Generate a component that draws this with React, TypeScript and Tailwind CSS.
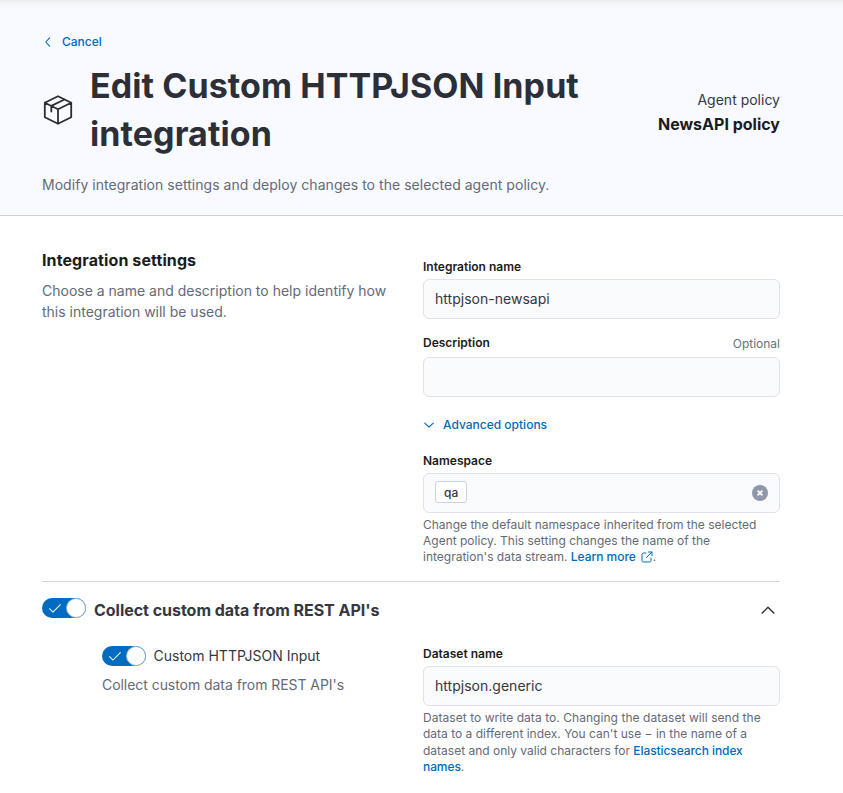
import React from "react";

function Switch() {
  return (
    <span className="flex h-5 w-11 shrink-0 items-center justify-end rounded-full bg-[#006bc0]">
      <svg className="mr-auto ml-[5px]" width="16" height="16" viewBox="0 0 16 16" fill="none" stroke="#fff" strokeWidth="1.05">
        <path d="M2.3 8.3 6 12l7.6-7.6" />
      </svg>
      <span className="size-5 rounded-full border border-[#9bb0c5] bg-white" />
    </span>
  );
}

function Label({ children }: { children: React.ReactNode }) {
  return <div className="text-[12px] leading-4 font-semibold text-[#1a1c21]">{children}</div>;
}

function Field({ children }: { children?: React.ReactNode }) {
  return (
    <div className="flex h-10 items-center rounded-[6px] border border-[#dfe1ef] bg-[#fafbfd] px-[11px] text-[14px] leading-5 tracking-[0.02px] text-[#343741]">
      {children}
    </div>
  );
}

export default function App() {
  return (
    <div className="h-[793px] w-full overflow-hidden bg-white font-[Inter,sans-serif] text-[14px] leading-[21px] text-[#343741]">
      <header className="h-[216px] border-b border-[#cbd1de] bg-[#f9faff] bg-[linear-gradient(#e9eaee,#f3f4f8_3px,#f9faff_9px)] pr-[63px] pl-[42px] pt-[34px]">
        <a className="flex h-4 items-center text-[12px] leading-4 font-medium text-[#006bb8]">
          <svg className="mr-2" width="12" height="12" viewBox="0 0 12 12" fill="none" stroke="currentColor" strokeWidth="1.1" strokeLinecap="round" strokeLinejoin="round">
            <path d="M7.6 1.9 3.8 6l3.8 4.1" />
          </svg>
          Cancel
        </a>
        <div className="mt-3 flex h-24 items-center">
          <svg className="shrink-0" width="32" height="32" viewBox="0 0 32 32" fill="none" stroke="#2b2d36" strokeWidth="1.8" strokeLinejoin="round" strokeLinecap="round">
            <path d="M16 2.2 29.2 8.7v14.6L16 29.8 2.8 23.3V8.7zM2.8 8.7 16 15.2l13.2-6.5M16 15.2v14.6M9.3 17.5v-5.6l13.2-6.4" />
          </svg>
          <h1 className="ml-4 w-[510px] text-[34px] leading-[48px] font-bold tracking-[0.08px] text-[#2d2f38]">Edit Custom HTTPJSON Input integration</h1>
          <div className="ml-auto pt-1 text-right">
            <div className="leading-[21px]">Agent policy</div>
            <div className="mt-0.5 text-[16px] leading-6 font-bold whitespace-nowrap text-[#1a1c21]">NewsAPI policy</div>
          </div>
        </div>
        <p className="mt-4 tracking-[0.04px] text-[#646a77]">Modify integration settings and deploy changes to the selected agent policy.</p>
      </header>

      <main className="mr-[63px] ml-[42px]">
        <section className="flex h-[366px] border-b border-[#cdd4e0]">
          <div className="w-[381px] shrink-0 pt-8">
            <h2 className="text-[16px] leading-6 font-bold tracking-[0.1px] text-[#1a1c21]">Integration settings</h2>
            <p className="mt-2 w-[360px] text-[#646a77]">Choose a name and description to help identify how this integration will be used.</p>
          </div>
          <div className="flex-1 pt-[43px]">
            <Label>Integration name</Label>
            <div className="mt-1"><Field>httpjson-newsapi</Field></div>
            <div className="mt-4 mb-[5px] flex justify-between">
              <Label>Description</Label>
              <span className="pt-px text-[12px] leading-4 text-[#69707d]">Optional</span>
            </div>
            <Field />
            <a className="mt-5 flex h-4 items-center text-[12px] leading-4 font-medium text-[#006bb8]">
              <svg className="mr-2" width="12" height="12" viewBox="0 0 12 12" fill="none" stroke="currentColor" strokeWidth="1.1" strokeLinecap="round" strokeLinejoin="round">
                <path d="M1.7 4.2 6 8l4.3-3.8" />
              </svg>
              Advanced options
            </a>
            <div className="mt-5"><Label>Namespace</Label></div>
            <div className="mt-1">
              <Field>
                <span className="mb-0.5 h-[22px] rounded-[3px] border border-[#cbd2e2] bg-white px-2 text-[12px] leading-[22px] font-medium">qa</span>
                <svg className="ml-auto" width="16" height="16" viewBox="0 0 16 16" fill="none">
                  <circle cx="8" cy="8" r="8" fill="#8f97a8" />
                  <path d="m5.6 5.6 4.8 4.8m0-4.8-4.8 4.8" stroke="#fff" strokeWidth="1.7" />
                </svg>
              </Field>
            </div>
            <p className="mt-1 text-[12px] leading-4 text-[#646a77]">
              Change the default namespace inherited from the selected
              <br />
              Agent policy. This setting changes the name of the
              <br />
              integration's data stream.{" "}
              <a className="font-medium tracking-[-0.03px] text-[#006bb8]">
                Learn more
                <svg className="ml-[5px] inline-block align-[-2px]" width="12" height="12" viewBox="0 0 12 12" fill="none" stroke="currentColor" strokeWidth="1" strokeLinecap="round">
                  <path d="M5 2H2.500Q1 2 1 3.500v6Q1 11 2.500 11h6Q10 11 10 9.500V7M7.500 1H11v3.500M11 1 5.500 6.500" />
                </svg>
              </a>
              .
            </p>
          </div>
        </section>

        <section>
          <div className="flex h-14 items-center">
            <div className="mb-1"><Switch /></div>
            <h2 className="ml-2 text-[16px] leading-6 font-bold tracking-[-0.03px]">Collect custom data from REST API's</h2>
            <svg className="mr-1 ml-auto" width="16" height="16" viewBox="0 0 16 16" fill="none" stroke="#343741" strokeWidth="1.5" strokeLinecap="round" strokeLinejoin="round">
              <path d="M2.200 11 8 5.300l5.800 5.700" />
            </svg>
          </div>
          <div className="flex">
            <div className="w-[381px] shrink-0 pt-2 pl-[60px]">
              <div className="flex h-5 items-center">
                <Switch />
                <span className="ml-[7.5px] pb-0.5">Custom HTTPJSON Input</span>
              </div>
              <p className="mt-2 tracking-[-0.05px] text-[#646a77]">Collect custom data from REST API's</p>
            </div>
            <div className="flex-1 pt-2">
              <Label>Dataset name</Label>
              <div className="mt-1"><Field>httpjson.generic</Field></div>
              <p className="mt-1 text-[12px] leading-[16.3px] text-[#646a77]">
                <span className="tracking-[0.055px]">Dataset to write data to. Changing the dataset will send the</span>
                <br />
                data to a different index. You can't use <code className="font-[Inter,sans-serif]">−</code> in the name of a
                <br />
                dataset and only valid characters for{" "}
                <a className="font-medium tracking-[-0.08px] text-[#006bb8]">
                  Elasticsearch index
                  <br />
                  names
                </a>
                .
              </p>
            </div>
          </div>
        </section>
      </main>
    </div>
  );
}
